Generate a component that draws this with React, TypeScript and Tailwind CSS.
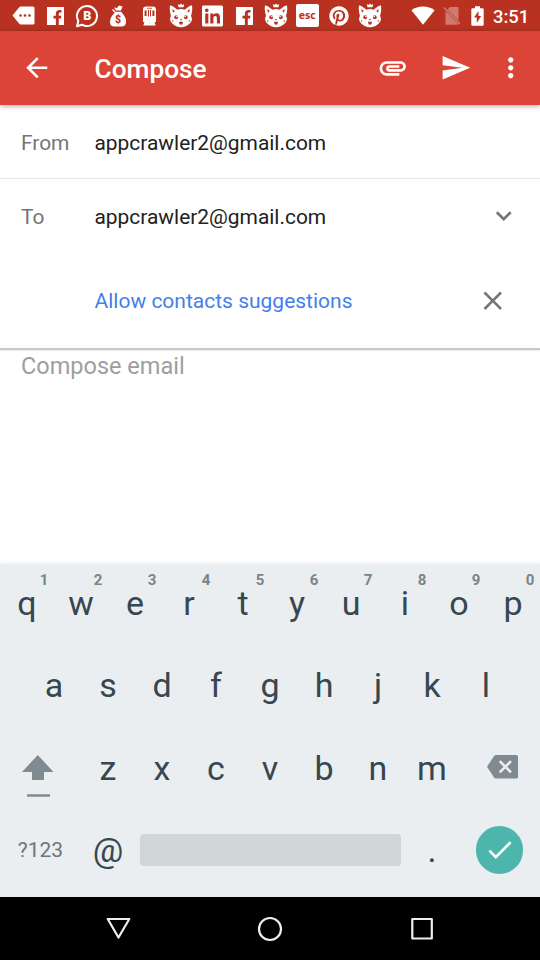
import type { ReactNode } from 'react';
import {
  MdArrowBack,
  MdAttachment,
  MdBackspace,
  MdCheck,
  MdClose,
  MdExpandMore,
  MdMoreVert,
  MdSend,
} from 'react-icons/md';
import { FaFacebookF, FaLinkedin, FaPinterest } from 'react-icons/fa';

const RED = '#b93221';

function Cell({ children }: { children: ReactNode }) {
  return <div className="flex h-full w-[31.5px] shrink-0 items-center justify-center">{children}</div>;
}

function Facebook() {
  return (
    <div className="flex h-[18px] w-[17.5px] items-end justify-end bg-white">
      <FaFacebookF className="mr-[1px] h-[15px] w-[11px] text-[#b93221]" />
    </div>
  );
}

function Fox() {
  return (
    <svg className="h-[25px] w-[24px]" viewBox="0 0 24 25" fill="#fff">
      <path d="M8.800 1l1.700 1L12 .6 13.500 2l1.700-1-.7 3.200h-5z" />
      <path d="M1 2.500Q2.500 1.800 8.500 6.800Q12 5.300 15.500 6.800Q21.500 1.800 23 2.500Q23.800 8 22 13Q24.300 17 21 20.200Q17 24.200 12 24.200Q7 24.200 3 20.200Q-.3 17 2 13Q.2 8 1 2.500z" />
      <g fill={RED}>
        <path d="M3.200 6l2.600 2.100-1.800 1.700z" />
        <path d="M20.800 6l-2.600 2.100 1.800 1.700z" />
        <ellipse cx="7.200" cy="14.200" rx="1.900" ry="2" />
        <ellipse cx="16.800" cy="14.200" rx="1.900" ry="2" />
        <path d="M10.800 16h2.400L12 17.400z" />
        <path d="M10 18.800h4Q13.800 21.800 12 21.800Q10.200 21.800 10 18.800z" />
        <circle cx="3.700" cy="18" r=".7" />
        <circle cx="20.300" cy="18" r=".7" />
      </g>
      <circle cx="7.900" cy="13.600" r=".8" />
      <circle cx="16.100" cy="13.600" r=".8" />
    </svg>
  );
}

function StatusBar() {
  return (
    <div className="flex h-[31px] items-center bg-[#b93221] pl-[8px]">
      <Cell>
        <svg className="h-[19px] w-[23px]" viewBox="0 0 23 19">
          <path d="M.5 9.500L7 1.500Q7.800.5 9 .5H21Q22.500.5 22.500 2V17Q22.500 18.500 21 18.500H9Q7.800 18.500 7 17.500z" fill="#fff" />
          <g fill={RED}>
            <circle cx="8.500" cy="9.500" r="1.300" />
            <circle cx="13" cy="9.500" r="1.300" />
            <circle cx="17.500" cy="9.500" r="1.300" />
          </g>
        </svg>
      </Cell>
      <Cell><Facebook /></Cell>
      <Cell>
        <svg className="h-[24px] w-[24px]" viewBox="0 0 24 24">
          <path d="M2 22.300L3.300 17A10 10 0 1 1 7 20.700z" fill="none" stroke="#fff" strokeWidth="2" strokeLinejoin="round" />
          <text x="12.300" y="16.200" textAnchor="middle" fontFamily="Roboto, sans-serif" fontWeight="900" fontSize="12.500" fill="#fff">B</text>
        </svg>
      </Cell>
      <Cell>
        <svg className="h-[22px] w-[18px]" viewBox="0 0 18 22" fill="#fff">
          <path d="M5 2.500L8 3 10 .5 13.500 1.500 12 5.500H7z" />
          <path d="M6.500 6.700h5.500Q17.500 12 17 17.500Q16.600 21.500 12.500 21.500h-7Q1.200 21.500 1 17.500Q.7 12 6.500 6.700z" />
          <path d="M3.500 4.500L6 7" stroke="#fff" strokeWidth="1.500" />
          <text x="9" y="18" textAnchor="middle" fontFamily="Roboto, sans-serif" fontWeight="900" fontSize="10.500" fill={RED}>$</text>
        </svg>
      </Cell>
      <Cell>
        <svg className="h-[20px] w-[15px]" viewBox="0 0 15 20">
          <path d="M4 .5h7q3 0 3 3v12.500H1V3.500Q1 .5 4 .5zM2.500 16h10l1.200 3.500H1.300z" fill="#fff" />
          <g fill={RED}>
            <path d="M2.600 4.500h2v5.500h-2zM6 4h1v6.500H6zM8 4h1v6.500H8zM10.400 4.500h2v5.500h-2z" />
            <path d="M5 1.800h5v.8H5z" />
          </g>
        </svg>
      </Cell>
      <Cell><Fox /></Cell>
      <Cell><FaLinkedin className="h-[24px] w-[21px] text-white" preserveAspectRatio="none" /></Cell>
      <Cell><Facebook /></Cell>
      <Cell><Fox /></Cell>
      <Cell>
        <div className="flex h-[23.500px] w-[22.500px] items-center justify-center rounded-[2px] bg-white font-['Open_Sans',sans-serif] text-[10.500px] leading-none font-bold text-[#b93221]">
          esc
        </div>
      </Cell>
      <Cell><FaPinterest className="h-[20px] w-[20px] text-white" /></Cell>
      <Cell><Fox /></Cell>
      <svg className="ml-[24.500px] h-[19px] w-[24px] shrink-0" viewBox="0 0 24 19">
        <path d="M12 18.700L.4 4.200Q5.500.5 12 .5T23.600 4.200z" fill="#fff" />
      </svg>
      <svg className="ml-[8px] h-[20px] w-[18px] shrink-0" viewBox="0 0 18 20">
        <g fill="#fff" fillOpacity=".35">
          <path d="M7 1h7.500q1 0 1 1v12.500L4.600 3.500z" />
          <path d="M2.500 5L15 17.800q-.3.900-1 .9H3.500q-1 0-1-1z" />
          <path d="M.3 2L1.500.9 17.500 17.200l-1.200 1.200z" />
        </g>
      </svg>
      <svg className="ml-[10px] h-[20px] w-[13px] shrink-0" viewBox="0 0 13 20">
        <path d="M4 .3h5v2h2.500q1.200 0 1.200 1.200v15q0 1.200-1.200 1.200h-10Q.3 19.700.3 18.500v-15Q.3 2.300 1.500 2.300H4z" fill="#fff" />
        <path d="M7.500 5L3 11.500h2.800v5.500L10.200 10H7.500z" fill={RED} />
      </svg>
      <span className="ml-[9.500px] pt-[3px] text-[18.400px] leading-[22px] font-medium text-white">3:51</span>
    </div>
  );
}

function Key({ label, hint }: { label: string; hint?: string }) {
  return (
    <div className="relative flex h-full w-[54px] shrink-0 justify-center pt-[17.500px] text-[34px] leading-[40px] text-[#37474f]">
      {label}
      {hint && (
        <span className="absolute top-[6px] left-[34px] w-[20px] text-center text-[15px] leading-[18px] font-bold text-[#7b8487]">
          {hint}
        </span>
      )}
    </div>
  );
}

function Keyboard() {
  return (
    <div className="h-[333px] bg-[#eaeef1] pt-[1px] shadow-[0_-1px_5px_rgba(0,0,0,0.08)]">
      <div className="flex h-[82.500px]">
        {[...'qwertyuiop'].map((k, i) => (
          <Key key={k} label={k} hint={String((i + 1) % 10)} />
        ))}
      </div>
      <div className="flex h-[82.500px] justify-center">
        {[...'asdfghjkl'].map((k) => <Key key={k} label={k} />)}
      </div>
      <div className="flex h-[82.500px]">
        <div className="flex w-[81px] pt-[24.500px] pl-[22px]">
          <svg className="h-[43px] w-[32px]" viewBox="0 0 32 43" fill="#7f8b90">
            <path d="M15.800 0L31.500 17H22v8H10v-8H0zM5 39.200h23v2.500H5z" />
          </svg>
        </div>
        {[...'zxcvbnm'].map((k) => <Key key={k} label={k} />)}
        <div className="flex w-[81px] justify-center pt-[21px] pl-[6px]">
          <MdBackspace className="h-[31.500px] w-[31.500px] text-[#7f8b90]" />
        </div>
      </div>
      <div className="flex h-[82.500px]">
        <div className="w-[81px] pt-[25px] text-center text-[21px] leading-[25px] text-[#6b767b]">?123</div>
        <Key label="@" />
        <div className="mt-[21.500px] mr-[4.500px] ml-[5px] h-[31.500px] w-[260.500px] rounded-[4px] bg-[#d0d5d8]" />
        <Key label="." />
        <div className="flex w-[81px] justify-center pt-[13.500px]">
          <div className="flex h-[47.500px] w-[47.500px] items-center justify-center rounded-full bg-[#4db6ac]">
            <MdCheck className="h-[31.500px] w-[31.500px] text-white" />
          </div>
        </div>
      </div>
    </div>
  );
}

export default function App() {
  return (
    <div className="flex h-[960px] w-[540px] flex-col overflow-hidden bg-white font-[Roboto,sans-serif]">
      <StatusBar />
      <header className="z-10 flex h-[74px] items-center bg-[#db4437] text-white shadow-[0_1px_5px_rgba(0,0,0,0.35)]">
        <MdArrowBack className="ml-[21px] h-[31.500px] w-[31.500px]" />
        <h1 className="ml-[42px] flex-1 pt-[2px] text-[26.250px] leading-[32px] font-medium">Compose</h1>
        <MdAttachment className="h-[31.500px] w-[31.500px]" />
        <MdSend className="ml-[31.500px] h-[31.500px] w-[31.500px]" />
        <MdMoreVert className="mr-[14px] ml-[23.500px] h-[31.500px] w-[31.500px]" />
      </header>
      <div className="flex h-[74px] items-center border-b border-[#e8e8e8] pt-[4px] text-[20.920px] leading-[25px]">
        <span className="w-[94.500px] pl-[21px] text-[#757575]">From</span>
        <span className="text-[#212121]">appcrawler2@gmail.com</span>
      </div>
      <div className="flex h-[74px] items-center pt-[2px] text-[20.920px] leading-[25px]">
        <span className="w-[94.500px] pl-[21px] text-[#757575]">To</span>
        <span className="flex-1 text-[#212121]">appcrawler2@gmail.com</span>
        <MdExpandMore className="mr-[21px] mb-[2px] h-[31.500px] w-[31.500px] text-[#757575]" />
      </div>
      <div className="flex h-[95px] items-center pl-[94.500px] text-[21px] leading-[25px] text-[#427fed]">
        <span className="flex-1 pt-[2px]">Allow contacts suggestions</span>
        <MdClose className="mr-[31.500px] h-[31.500px] w-[31.500px] text-[#757575]" />
      </div>
      <div className="h-[2px] bg-[#c8c8c8] shadow-[0_1px_1px_rgba(0,0,0,0.08)]" />
      <div className="flex-1 pt-[2px] pl-[21px] text-[23.500px] leading-[28px] text-[#9e9e9e]">Compose email</div>
      <Keyboard />
      <nav className="flex h-[63px] items-center justify-center bg-black">
        <svg className="h-[30px] w-[340px]" viewBox="0 0 340 30" fill="none" stroke="#eee" strokeWidth="2.200" strokeLinejoin="round">
          <path d="M7.700 5h21.600L18.500 23.500z" />
          <circle cx="170" cy="15" r="11" />
          <rect x="312.300" y="5" width="19.500" height="19.500" />
        </svg>
      </nav>
    </div>
  );
}
